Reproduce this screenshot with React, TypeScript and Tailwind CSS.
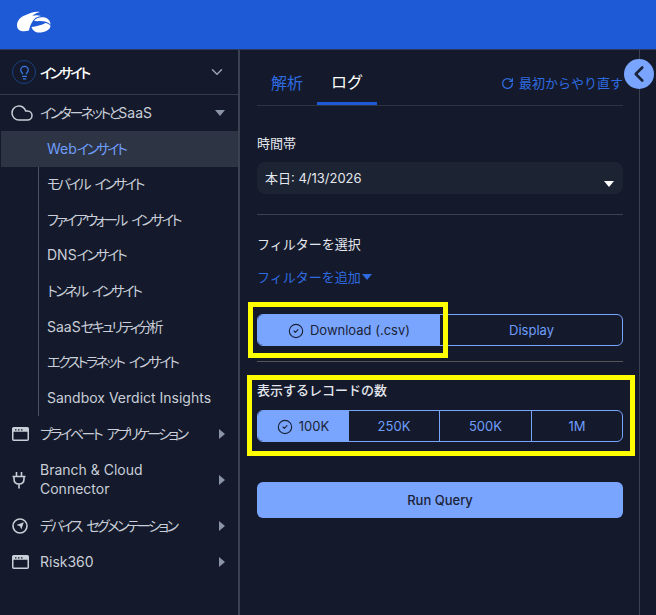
import { ChevronDown, ChevronLeft, CircleCheck, Cloud, Lightbulb, RotateCw } from "lucide-react";

const font = { fontFamily: '"Inter", "Noto Sans CJK JP", sans-serif' };

const subItems = [
  "Webインサイト",
  "モバイル インサイト",
  "ファイアウォール インサイト",
  "DNSインサイト",
  "トンネル インサイト",
  "SaaSセキュリティ分析",
  "エクストラネット インサイト",
  "Sandbox Verdict Insights",
];

// Sidebar Japanese is set much narrower than the panel text
function Narrow({ text }: { text: string }) {
  const parts = text.split(/([\u3040-\u30ff\u4e00-\u9fff ]*[\u3040-\u30ff\u4e00-\u9fff]+)/);
  return (
    <>
      {parts.map((part, i) =>
        i % 2 === 1 ? (
          <span key={i} className="tracking-[-2.5px] [word-spacing:4px]">
            {part}
          </span>
        ) : (
          part
        ),
      )}
    </>
  );
}

function Logo() {
  return (
    <svg width="34" height="22" viewBox="0 0 34 22" fill="white">
      <path d="M0 14.500C0 8.500 5 5 10 3.500C14 1.500 19 0 23 1C19 2 17 3 15.500 5C18 4 21 4 24 5C20 5.500 17 7.500 15.500 10.500C13.500 13.500 12.500 16.500 12 19.500C5 21.500 0 19.500 0 14.500Z" />
      <path d="M17 9.500C19.500 6.500 24 5.500 28 6.500C31 7.500 33.500 10 33.500 13.500C31 11 26 9.800 21 10.200C19.500 10.300 18 10.200 17 9.500Z" />
      <path d="M14.500 16C19 15.500 25 14 28.500 12C31 12.500 33 13.500 33.500 15C33 19 28 21.500 22 21.500C18.500 21.500 15.500 19.500 14.500 16Z" />
    </svg>
  );
}

function WindowIcon() {
  return (
    <svg width="17" height="14" viewBox="0 0 17 14" className="text-[#c9ced8]">
      <rect x="0.750" y="0.750" width="15.500" height="12.500" rx="1" fill="none" stroke="currentColor" strokeWidth="1.500" />
      <rect x="0.750" y="0.750" width="15.500" height="4" fill="currentColor" />
      <path d="M3 2.200h1.500v1.200H3ZM6 2.200h1.500v1.200H6ZM9 2.200h1.500v1.200H9Z" fill="#141a2b" />
    </svg>
  );
}

function PlugIcon() {
  return (
    <svg width="14" height="18" viewBox="0 0 14 18" fill="none" stroke="currentColor" strokeWidth="1.600" className="text-[#c9ced8]">
      <path d="M4.500 1v4.500M9.500 1v4.500M0.500 5.500h13M2 5.500v2.500c0 3 2 5 5 5s5-2 5-5V5.500M7 13v4.500" />
    </svg>
  );
}

function CompassIcon() {
  return (
    <svg width="16" height="16" viewBox="0 0 16 16" className="text-[#c9ced8]">
      <circle cx="8" cy="8" r="7" fill="none" stroke="currentColor" strokeWidth="1.600" />
      <path d="M11.800 4.200 9.300 11.500 8 8.300 4.500 7Z" fill="currentColor" />
    </svg>
  );
}

function Caret({ right }: { right?: boolean }) {
  return right ? (
    <svg width="6" height="10" viewBox="0 0 6 10" className="fill-[#8b93a7]">
      <path d="M0 0l6 5-6 5Z" />
    </svg>
  ) : (
    <svg width="10" height="6" viewBox="0 0 10 6" className="fill-[#8b93a7]">
      <path d="M0 0h10L5 6Z" />
    </svg>
  );
}

function NavRow({ icon, label, className }: { icon: React.ReactNode; label: string; className: string }) {
  return (
    <div className={`flex items-center pl-3 pr-[13px] ${className}`}>
      <div className="flex w-[28px] shrink-0 items-center">{icon}</div>
      <span className="max-w-[170px] pb-[2px] text-[14px] leading-[19px] text-[#c9ced8]">
        <Narrow text={label} />
      </span>
      <span className="flex-1" />
      <Caret right />
    </div>
  );
}

function Sidebar() {
  return (
    <aside className="w-[240px] shrink-0 border-r-2 border-[#3a4150] [font-feature-settings:'palt']">
      <div className="flex h-[45px] items-center border-b border-[#333a49] pl-3 pr-[12px]">
        <div className="flex h-6 w-6 items-center justify-center rounded-full border border-[#1c3f86]">
          <Lightbulb size={15} className="text-[#3a7be8]" />
        </div>
        <span className="ml-[4px] flex-1 text-[14px] font-medium text-white">
          <Narrow text="インサイト" />
        </span>
        <ChevronDown size={18} className="text-[#9aa2b3]" />
      </div>
      <div className="flex h-[36px] items-center pl-[10px] pr-[13px]">
        <Cloud size={24} strokeWidth={1.5} className="text-[#c9ced8]" />
        <span className="ml-[6px] flex-1 pb-[2px] text-[14px] text-[#c9ced8]">
          <Narrow text="インターネットとSaaS" />
        </span>
        <Caret />
      </div>
      <div className="ml-[38px] border-l border-[#4b5262]">
        {subItems.map((item, i) => (
          <div
            key={item}
            className={
              i === 0
                ? "-ml-[38px] flex h-[36px] items-center bg-[#2d3444] pb-[2px] pl-[46px] text-[14px] text-[#6f9dfa]"
                : "flex h-[35.6px] items-center pb-[2px] pl-[8px] text-[14px] text-[#c9ced8]"
            }
          >
            <span>
              <Narrow text={item} />
            </span>
          </div>
        ))}
      </div>
      <NavRow className="h-[36px]" icon={<WindowIcon />} label="プライベート アプリケーション" />
      <NavRow className="h-[56px]" icon={<PlugIcon />} label="Branch & Cloud Connector" />
      <NavRow className="h-[36px]" icon={<CompassIcon />} label="デバイス セグメンテーション" />
      <NavRow className="h-[36px]" icon={<WindowIcon />} label="Risk360" />
    </aside>
  );
}

function Segment({ label, selected, className }: { label: string; selected?: boolean; className: string }) {
  return (
    <div
      className={`flex items-center justify-center gap-[6px] pt-[1px] text-[13px] ${
        selected ? "bg-[#7aa5ff] text-[#1a2338]" : "text-[#6f9dfa]"
      } ${className}`}
    >
      {selected && <CircleCheck size={16} strokeWidth={1.7} />}
      {label}
    </div>
  );
}

function Panel() {
  return (
    <main className="relative w-[400px] shrink-0 border-r border-[#3a4150] pl-[17px] pr-[16px]">
      <div className="flex h-[56px] items-end justify-between border-b border-[#2c3343]">
        <div className="flex">
          <div className="flex h-[44px] w-[60px] items-center justify-center text-[16px] text-[#2f6be0]">解析</div>
          <div className="flex h-[44px] w-[60px] items-center justify-center border-b-[3px] border-[#1f5ad6] text-[16px] text-white">
            ログ
          </div>
        </div>
        <div className="mb-[12px] flex items-center gap-[5px] text-[13px] text-[#2f6be0]">
          <RotateCw size={13} strokeWidth={2.4} />
          最初からやり直す
        </div>
      </div>

      <p className="mt-[27px] text-[13px] leading-[20px] text-[#e4e7ee]">時間帯</p>
      <div className="relative mt-[9px] flex h-[32px] items-center rounded-[8px] bg-[#1c2333] pl-2 pt-[1px] text-[13px] text-[#e4e7ee]">
        本日: 4/13/2026
        <svg width="10" height="6" viewBox="0 0 10 6" className="absolute bottom-[7px] right-[9px] fill-white">
          <path d="M0 0h10L5 6Z" />
        </svg>
      </div>
      <div className="mt-[20px] border-t border-[#3a4150]" />

      <p className="mt-[19px] text-[13px] leading-[20px] text-[#e4e7ee]">フィルターを選択</p>
      <div className="mt-[13px] flex items-center gap-[1px] text-[13px] leading-[20px] text-[#2f6be0]">
        フィルターを追加
        <svg width="10" height="6" viewBox="0 0 10 6" className="fill-[#2f6be0]">
          <path d="M0 0h10L5 6Z" />
        </svg>
      </div>

      <div className="mt-[27px] flex h-[32px] overflow-hidden rounded-[6px] border border-[#7aa5ff]">
        <Segment label="Download (.csv)" selected className="w-[183px] border-r border-[#141a2b]" />
        <Segment label="Display" className="flex-1" />
      </div>
      <div className="mt-[15px] border-t border-[#555]" />

      <p className="mt-[18px] text-[13px] font-medium leading-[20px] text-[#e4e7ee]">表示するレコードの数</p>
      <div className="mt-[10px] flex h-[32px] overflow-hidden rounded-[6px] border border-[#7aa5ff]">
        <Segment label="100K" selected className="w-[90px]" />
        <Segment label="250K" className="w-[91px] border-l border-[#7aa5ff]" />
        <Segment label="500K" className="w-[92px] border-l border-[#7aa5ff]" />
        <Segment label="1M" className="flex-1 border-l border-[#7aa5ff]" />
      </div>

      <button className="mt-[40px] h-[36px] w-full rounded-[6px] bg-[#7aa5ff] pt-[1px] text-[13px] font-medium text-[#1a2338]">
        Run Query
      </button>

      {/* Collapse handle sits over the panel edge */}
      <div className="absolute right-[-15px] top-[9px] flex h-[30px] w-[30px] items-center justify-center rounded-full bg-[#7aa5ff] text-[#1a2338]">
        <ChevronLeft size={26} strokeWidth={2.4} />
      </div>

      {/* Yellow annotation boxes */}
      <div className="absolute left-[8px] top-[252px] h-[56px] w-[200px] border-[5px] border-[#ffff00]" />
      <div className="absolute left-[7px] top-[325px] h-[81px] w-[388px] border-[5px] border-[#ffff00]" />
    </main>
  );
}

export default function App() {
  return (
    <div className="h-[615px] w-[656px] overflow-hidden bg-[#141a2b]" style={font}>
      <header className="h-[50px] border-b border-[#2b3a5e] bg-[#1f5ad6] pl-[17px] pt-[11px]">
        <Logo />
      </header>
      <div className="flex h-[565px]">
        <Sidebar />
        <Panel />
      </div>
    </div>
  );
}
